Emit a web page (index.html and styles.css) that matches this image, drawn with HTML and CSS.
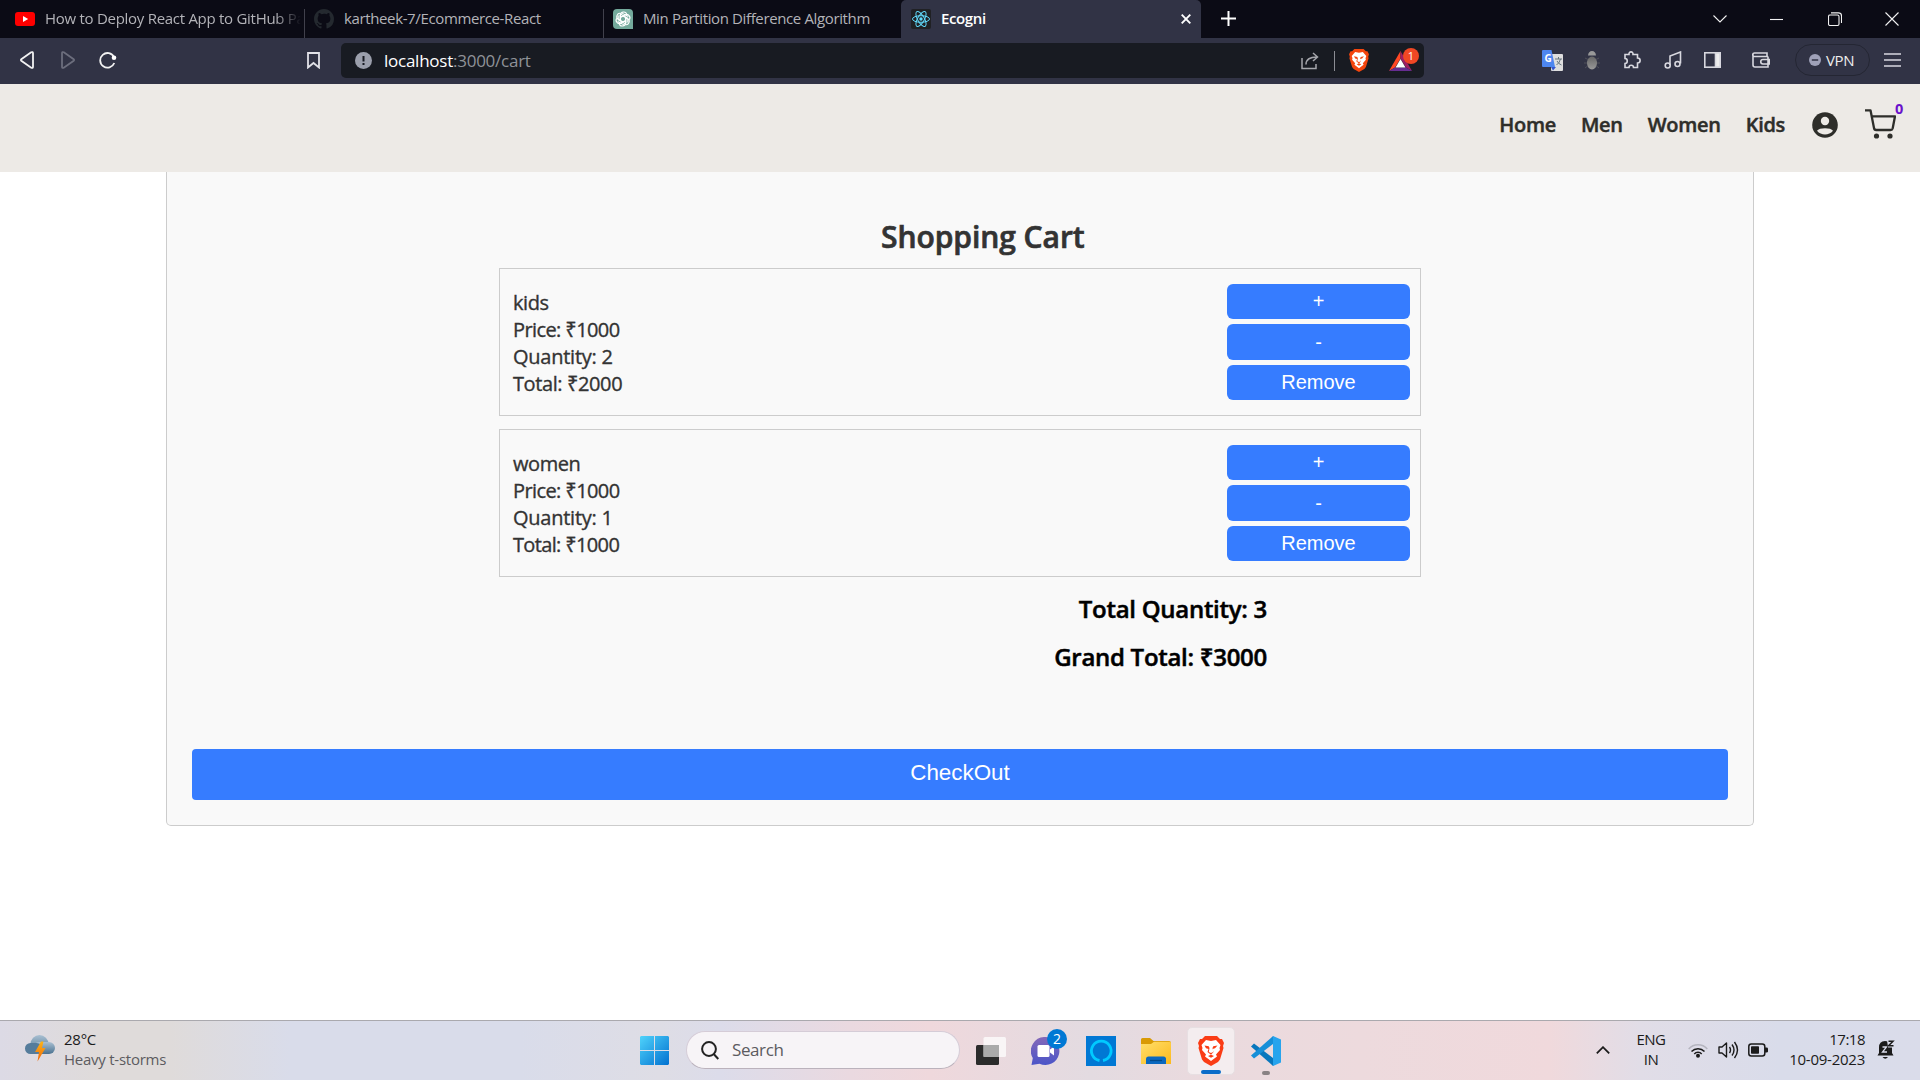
FILE: index.html
```
<!DOCTYPE html>
<html lang="en">
<head>
<meta charset="utf-8">
<title>Ecogni</title>
<link rel="stylesheet" href="styles.css">
</head>
<body>
<svg class="defs" width="0" height="0">
  <defs>
    <symbol id="brave" viewBox="0 0 26 30">
      <path d="M7 0h12l3 3h2l2 4-1 3 .5 2-3.500 11.500L20 26l-7 4-7-4-2-2.500L.5 12 1 10 0 7l2-4h2z"/>
      <path fill="#fff" d="M8 4l5 1 5-1 4.500 5-1 3 .5 2-4 4.500 1 2-6 4.500-6-4.500 1-2L4 14l.5-2-1-3z"/>
      <path d="M6.500 9.500l4.200.8.800 1.700-.7 4 2.200 1 2.200-1-.7-4 .8-1.700 4.200-.8-2.500 2.800-2.500.7 1 3-2.500 2.800L9.500 16l1-3-2.500-.7zM10 20l3-1.300 3 1.300-3 1.800z"/>
      <path fill="none" stroke="#fff" stroke-width="1.500" d="M13 7v9"/>
    </symbol>
    <symbol id="openai" viewBox="0 0 20 20">
      <path fill="#74aa9c" d="M4 0h12a4 4 0 0 1 4 4v16H4a4 4 0 0 1-4-4V4a4 4 0 0 1 4-4z"/>
      <g fill="none" stroke="#fff" stroke-width="1.100">
        <path id="petal" d="M7.500 11.500V6.200c0-4 5.600-4.300 6.200-.8M7.500 8l4.300-2.500 3.600 2.100"/>
        <use href="#petal" transform="rotate(60 10 10)"/><use href="#petal" transform="rotate(120 10 10)"/>
        <use href="#petal" transform="rotate(180 10 10)"/><use href="#petal" transform="rotate(240 10 10)"/>
        <use href="#petal" transform="rotate(300 10 10)"/>
      </g>
    </symbol>
    <linearGradient id="win" x1="0" y1="0" x2="1" y2="1"><stop offset="0" stop-color="#4fd3fb"/><stop offset="1" stop-color="#0271d0"/></linearGradient>
    <linearGradient id="cloud" x1="0" y1="0" x2="0" y2="1"><stop offset="0" stop-color="#a9c0d2"/><stop offset="1" stop-color="#4a7290"/></linearGradient>
    <linearGradient id="bolt" x1="0" y1="0" x2="0" y2="1"><stop offset="0" stop-color="#fbb417"/><stop offset="1" stop-color="#f0650b"/></linearGradient>
    <linearGradient id="folder" x1="0" y1="0" x2="1" y2="1"><stop offset="0" stop-color="#ffdf6b"/><stop offset="1" stop-color="#fcb91d"/></linearGradient>
    <linearGradient id="chat" x1="0" y1="0" x2="0" y2="1"><stop offset="0" stop-color="#8468b8"/><stop offset="1" stop-color="#4b55c8"/></linearGradient>
    <linearGradient id="bug" x1="0" y1="0" x2="0" y2="1"><stop offset="0" stop-color="#666"/><stop offset="1" stop-color="#999"/></linearGradient>
  </defs>
</svg>

<div class="tabbar">
  <div class="tab tab-youtube">
    <svg width="20" height="14" viewBox="0 0 20 14"><rect width="20" height="14" rx="3" fill="#f00"/><path fill="#fff" d="M8 4l5.200 3L8 10z"/></svg>
    <span class="tab-title faded">How to Deploy React App to GitHub Pa</span>
  </div>
  <div class="tab tab-github">
    <svg width="20" height="20" viewBox="0 0 16 16"><path fill="#24292f" d="M8 0C3.580 0 0 3.580 0 8c0 3.540 2.290 6.530 5.470 7.590.4.070.55-.17.55-.38 0-.19-.01-.82-.01-1.490-2.010.37-2.530-.49-2.690-.94-.09-.23-.48-.94-.82-1.130-.28-.15-.68-.52-.01-.53.63-.01 1.080.58 1.230.82.72 1.210 1.870.87 2.330.66.07-.52.28-.87.51-1.070-1.780-.2-3.640-.89-3.640-3.950 0-.87.31-1.590.82-2.150-.08-.2-.36-1.020.08-2.120 0 0 .67-.21 2.200.82A7.600 7.600 0 0 1 8 3.870c.68 0 1.360.09 2 .26 1.530-1.040 2.200-.82 2.200-.82.44 1.100.16 1.920.08 2.120.51.56.82 1.270.82 2.150 0 3.070-1.870 3.750-3.650 3.950.29.25.54.73.54 1.480 0 1.070-.01 1.930-.01 2.200 0 .21.15.46.55.38A8 8 0 0 0 16 8c0-4.420-3.580-8-8-8z"/></svg>
    <span class="tab-title">kartheek-7/Ecommerce-React</span>
  </div>
  <div class="tab tab-chat">
    <svg width="20" height="20"><use href="#openai"/></svg>
    <span class="tab-title">Min Partition Difference Algorithm</span>
  </div>
  <div class="tab tab-active">
    <svg width="20" height="20" viewBox="0 0 20 20"><rect width="20" height="20" rx="2" fill="#202124"/><circle cx="10" cy="10" r="1.700" fill="#61dafb"/><g fill="none" stroke="#61dafb" stroke-width="1"><ellipse cx="10" cy="10" rx="8.500" ry="3.300"/><ellipse cx="10" cy="10" rx="8.500" ry="3.300" transform="rotate(60 10 10)"/><ellipse cx="10" cy="10" rx="8.500" ry="3.300" transform="rotate(120 10 10)"/></g></svg>
    <span class="tab-title">Ecogni</span>
    <svg class="tab-close" width="10" height="10" viewBox="0 0 10 10"><path stroke="#fff" stroke-width="1.900" d="M.7.7l8.600 8.600M9.300.7L.7 9.300"/></svg>
  </div>
  <svg class="new-tab" width="15" height="15" viewBox="0 0 15 15"><path stroke="#fff" stroke-width="2" d="M7.500 0v15M0 7.500h15"/></svg>
  <div class="window-controls">
    <svg width="14" height="14" viewBox="0 0 14 14"><path d="M.5 3.500L7 10l6.500-6.500"/></svg>
    <svg width="14" height="14" viewBox="0 0 14 14"><path d="M0 7.500h13"/></svg>
    <svg width="14" height="14" viewBox="0 0 14 14"><rect x=".5" y="3" width="10.500" height="10.500" rx="1.500"/><path d="M3 .9h7.500a3 3 0 0 1 3 3V11"/></svg>
    <svg width="14" height="14" viewBox="0 0 14 14"><path d="M.5.500l13 13M13.500.500l-13 13"/></svg>
  </div>
</div>

<div class="toolbar">
  <svg class="back" width="14" height="18" viewBox="0 0 14 18"><path d="M11.200 1.300L1.300 8.300q-.8.700 0 1.400l9.900 7q1.800.8 1.800-1V2.300q0-1.800-1.800-1z"/></svg>
  <svg class="forward" width="14" height="18" viewBox="0 0 14 18"><path d="M2.800 1.300l9.900 7q.8.700 0 1.400l-9.900 7q-1.800.8-1.800-1V2.300q0-1.800 1.800-1z"/></svg>
  <svg class="reload" width="18" height="18" viewBox="0 0 18 18"><path d="M15 6A7.300 7.300 0 1 0 15.300 12"/><circle cx="15" cy="6.800" r="2.300" fill="#fff" stroke="none"/></svg>
  <svg class="bookmark" width="13" height="17" viewBox="0 0 13 17"><path d="M1 1h11v14.500L6.500 11 1 15.500z"/></svg>
  <div class="address">
    <svg width="17" height="17" viewBox="0 0 17 17"><circle cx="8.500" cy="8.500" r="8.500" fill="#9b9fac"/><path stroke="#181b22" stroke-width="2" d="M8.500 4v5.500M8.500 11v2"/></svg>
    <span class="url"><b>localhost</b>:3000/cart</span>
    <svg class="share" width="18" height="18" viewBox="0 0 18 18"><path d="M1 6v10.500h14V12M5 12.500c0-5 3-7.500 11-7.500M12 1l4.500 4-4.500 4"/></svg>
    <span class="divider"></span>
    <svg class="shield" width="20" height="23"><use href="#brave"/></svg>
    <span class="rewards">
      <svg width="23" height="20" viewBox="0 0 23 20"><path fill="#ff4724" d="M11.500 0L0 20l6-3.500 5.500-9z"/><path fill="#9e1f63" d="M11.500 0L23 20l-6-3.500-5.500-9z"/><path fill="#662d91" d="M0 20h23l-6-3.500H6z"/><path fill="#fff" d="M11.500 8l5 8.500h-10z"/></svg>
      <span class="count">1</span>
    </span>
  </div>
  <div class="extensions">
    <svg class="translate" width="21" height="21" viewBox="0 0 21 21"><rect x="9" y="4" width="12" height="17" rx="1" fill="#dedede"/><path d="M13 9h7M16.500 7v2M18.500 9q-1 4-4 6M15 11q1.500 3 4.500 4" stroke="#66757f" fill="none"/><path fill="#4d86f0" d="M1 0h8.500l3.500 17H1a1 1 0 0 1-1-1V1a1 1 0 0 1 1-1z"/><path fill="#3557cf" d="M9 17h5l-3 3.500z"/><text x="2.500" y="12" class="g-letter">G</text></svg>
    <svg class="bug" width="16" height="19" viewBox="0 0 16 19"><path stroke="#50505a" d="M1 7l4 2M15 7l-4 2M0 12h16M1 17l4-3M15 17l-4-3"/><path fill="#999" d="M4 4.500Q4.500 0 8 0t4 4.500z"/><ellipse cx="8" cy="12" rx="5" ry="6.500" fill="url(#bug)"/></svg>
    <svg class="line puzzle" width="18" height="18" viewBox="0 0 18 18"><path d="M2 3.500h4C5.500 0 10.500 0 10 3.500h4.500V7c3.500 0 3.500 5 0 5v4.500h-4c0-3-4.500-3-4.500 0H2v-4c3 0 3-5 0-5z"/></svg>
    <svg class="line music" width="18" height="18" viewBox="0 0 18 18"><path d="M6 14V5l10.500-4v11.500"/><circle cx="3.700" cy="14.500" r="2.500"/><circle cx="13.500" cy="13" r="2.500"/></svg>
    <svg class="line panel" width="17" height="16" viewBox="0 0 17 16"><rect x=".8" y=".8" width="15.400" height="14.400"/><path fill="#eee" d="M11.500 1H16v14h-4.500z"/></svg>
    <svg class="line wallet" width="18" height="16" viewBox="0 0 18 16"><path d="M16 4.500H2.500a1.500 1.500 0 0 1 0-3.500H15v3.500M1 2.500V13a2 2 0 0 0 2 2h13V4.500M17.500 7.500H11a2 2 0 0 0 0 4.500h6.500z"/></svg>
    <span class="vpn"><svg width="12" height="12" viewBox="0 0 12 12"><circle cx="6" cy="6" r="6" fill="#9fa1b8"/><path stroke="#313345" stroke-width="1.500" d="M2.800 6h6.400"/></svg>VPN</span>
    <svg class="line burger" width="17" height="14" viewBox="0 0 17 14"><path d="M0 1h17M0 7h17M0 13h17"/></svg>
  </div>
</div>

<header class="site-header">
  <nav>
    <a class="nav-home">Home</a><a class="nav-men">Men</a><a class="nav-women">Women</a><a class="nav-kids">Kids</a>
  </nav>
  <svg class="account" width="26" height="26" viewBox="0 0 26 26"><circle cx="13" cy="13" r="12.800" fill="#2e2e2a"/><circle cx="13" cy="9" r="4.200" fill="#edeae6"/><path fill="#edeae6" d="M5 18.800C7 15.500 19 15.500 21 18.800c-4 5-12 5-16 0z"/></svg>
  <div class="cart-link">
    <svg width="31" height="30" viewBox="0 0 31 30"><path fill="none" stroke="#2e2e2a" stroke-width="2.300" stroke-linejoin="round" d="M0 1.300h5.500L9 19a2.300 2.300 0 0 0 2.200 2h14.300a2.300 2.300 0 0 0 2.200-1.800L30 7.300H6.700"/><circle cx="11.500" cy="27" r="2.600" fill="#2e2e2a"/><circle cx="25" cy="27" r="2.600" fill="#2e2e2a"/></svg>
    <span class="cart-count">0</span>
  </div>
</header>

<main class="cart">
  <h1>Shopping Cart</h1>
  <section class="item">
    <div class="details"><p class="name">kids</p><p class="price">Price: ₹1000</p><p class="qty">Quantity: 2</p><p class="sum">Total: ₹2000</p></div>
    <div class="actions"><button>+</button><button class="minus">-</button><button>Remove</button></div>
  </section>
  <section class="item">
    <div class="details"><p class="name">women</p><p class="price">Price: ₹1000</p><p class="qty">Quantity: 1</p><p class="sum narrow">Total: ₹1000</p></div>
    <div class="actions"><button>+</button><button class="minus">-</button><button>Remove</button></div>
  </section>
  <div class="totals"><p>Total Quantity: 3</p><p>Grand Total: ₹3000</p></div>
  <button class="checkout">CheckOut</button>
</main>

<footer class="taskbar">
  <div class="weather">
    <svg width="30" height="27" viewBox="0 0 30 27"><circle cx="14.500" cy="9" r="9" fill="url(#cloud)"/><rect x="8" y="7" width="22" height="12" rx="6" fill="url(#cloud)"/><rect y="8" width="17" height="11" rx="5.500" fill="#557c9b"/><path fill="url(#bolt)" d="M16 6.500h2.500L17 13h3.500L12.500 26.500 14 17h-4z"/></svg>
    <div class="weather-text"><p>28°C</p><p class="muted">Heavy t-storms</p></div>
  </div>
  <div class="apps">
    <svg width="29" height="29" viewBox="0 0 29 29"><path fill="url(#win)" d="M1 0h13v14H0V1zM15 0h13l1 1v13H15zM0 15h14v14H1l-1-1zM15 15h14v13l-1 1H15z"/></svg>
    <div class="search"><svg width="18" height="19" viewBox="0 0 18 19"><circle cx="8" cy="8" r="6.900"/><path d="M12.700 13l4.600 5"/></svg>Search</div>
    <svg class="task-view" width="30" height="28" viewBox="0 0 30 28"><rect y="8" width="23" height="20" rx="1.500" fill="#2b2b2b"/><rect x="7.500" width="22.500" height="20" rx="1.500" fill="#fff" opacity=".72"/><path fill="#aaa" d="M7.500 8H23v12H7.500z"/></svg>
    <div class="meet">
      <svg width="29" height="28" viewBox="0 0 29 28"><path fill="url(#chat)" d="M14.500 0a14 14 0 1 1-6 26.700L.5 28l1.300-7A14 14 0 0 1 14.500 0z"/><rect x="6.500" y="8" width="12" height="12" rx="1.500" fill="#fff"/><path fill="#fff" d="M19 12.500l4-3v9l-4-3z"/></svg>
      <span class="badge">2</span>
    </div>
    <svg class="alexa" width="30" height="30" viewBox="0 0 30 30"><path fill="#0078d4" d="M0 0h30v30H0z"/><path fill="none" stroke="#00caff" stroke-width="2.800" d="M13.500 24.500A9.800 9.800 0 1 1 17 24.500"/></svg>
    <svg class="explorer" width="30" height="26" viewBox="0 0 30 26"><path fill="#d99a04" d="M0 1.500Q0 0 1.500 0H9l3.500 3H28q2 0 2 2v8H0z"/><path fill="url(#folder)" d="M0 6h10l3-2.200h15.500Q30 3.800 30 5v21H0z"/><path fill="#0b68bf" d="M5 26v-5q0-2.500 2.500-2.500h15q2.500 0 2.500 2.500v5z"/><path stroke="#034a8a" stroke-width="1.300" d="M9 22.500h12"/></svg>
    <div class="app-active"><svg width="26" height="30"><use href="#brave"/></svg><span></span></div>
    <div class="app-code"><svg width="30" height="30" viewBox="0 0 30 30"><path fill="#0877bd" d="M0 10.500l3-3L26 25l-4 5z"/><path fill="#168fd8" d="M0 19.500l3 3L26 5l-4-5z"/><path fill="#27a4ed" d="M22 0l8 3.500v23L22 30z"/></svg><span></span></div>
  </div>
  <div class="tray">
    <svg width="14" height="8" viewBox="0 0 14 8"><path fill="none" stroke="#1b1b1b" stroke-width="1.800" d="M.8 7.300L7 1.200l6.200 6.100"/></svg>
    <div class="lang"><p>ENG</p><p>IN</p></div>
    <svg class="wifi" width="20" height="15" viewBox="0 0 20 15"><g fill="none" stroke="#1b1b1b" stroke-width="1.500"><path stroke="#b5b5bf" d="M.7 6a12.500 12.500 0 0 1 18.600 0"/><path d="M3.500 8.500a9 9 0 0 1 13 0M6.300 11a5 5 0 0 1 7.400 0"/></g><circle cx="10" cy="12.800" r="2" fill="#1b1b1b"/></svg>
    <svg class="volume" width="21" height="18" viewBox="0 0 21 18"><g fill="none" stroke="#1b1b1b" stroke-width="1.400"><path stroke-linejoin="round" d="M1 6h3l4.500-4v14L4 12H1z"/><path d="M11.500 6q2 3 0 6M14 3.500q4 5.500 0 11M16.500 1q6 8 0 16"/></g></svg>
    <svg class="battery" width="20" height="14" viewBox="0 0 20 14"><rect x=".8" y="1" width="16" height="12" rx="2.500" fill="none" stroke="#1b1b1b" stroke-width="1.500"/><rect x="3" y="3.200" width="8" height="7.600" rx=".8" fill="#1b1b1b"/><path fill="#1b1b1b" d="M17 4.500h1.500q1.500 0 1.500 1v3q0 1-1.500 1H17z"/></svg>
    <div class="clock"><p class="time">17:18</p><p>10-09-2023</p></div>
    <svg class="bell" width="18" height="20" viewBox="0 0 18 20"><path fill="#1b1b1b" d="M2 7.500Q2 1 8 1q7 0 7 7v5l1.500 2.500H.5L2 13zM5.500 17h5.500q-2.700 3.500-5.500 0z"/><path fill="none" stroke="#dadcea" stroke-width="1.300" d="M5.500 7h4l-4 5h4.500"/><path fill="#dadcea" d="M10 0h8v7.500h-7z"/><path fill="none" stroke="#1b1b1b" stroke-width="1.500" d="M11.500 1.200H16l-4.500 4.600H16.500"/></svg>
  </div>
</footer>
</body>
</html>
```
FILE: styles.css
```
* { box-sizing: border-box; }
body { margin: 0; width: 1920px; height: 1080px; overflow: hidden; display: flex; flex-direction: column; background: #fff; font-family: "Open Sans", "Noto Sans", sans-serif; }
p, h1 { margin: 0; }
svg { display: block; flex: none; }
.defs { position: absolute; }

.tabbar { flex: none; height: 38px; display: flex; align-items: stretch; background: #0b0b15; }
.tab { display: flex; align-items: center; gap: 10px; color: #b3b3b8; font-size: 15px; letter-spacing: -.37px; white-space: nowrap; }
.tab-youtube { width: 304px; padding-left: 15px; }
.tab-title { line-height: 30px; padding-bottom: 2px; }
.faded { width: 259px; letter-spacing: -.28px; -webkit-mask-image: linear-gradient(90deg, #000 230px, transparent 256px); mask-image: linear-gradient(90deg, #000 230px, transparent 256px); }
.tab-github, .tab-chat { padding-left: 10px; background: linear-gradient(#41414c, #41414c) 0 9px / 1px 29px no-repeat; }
.tab-github { width: 299px; }
.tab-chat { width: 298px; }
.tab-active { width: 300px; padding: 0 10px; border-radius: 5px 5px 0 0; background: #313345; color: #fff; font-weight: 600; }
.tab-close { margin-left: auto; }
.new-tab { margin: 11px 0 0 20px; }
.window-controls { margin-left: auto; margin-right: 21px; padding-bottom: 1px; display: flex; align-items: center; gap: 43.500px; fill: none; stroke: #f2f2f2; stroke-width: 1.100; }

.toolbar { flex: none; height: 46px; display: flex; align-items: center; background: #313345; fill: none; stroke-width: 1.800; padding-bottom: 2px; }
.back { margin-left: 20px; stroke: #f2f2f2; }
.forward { margin-left: 27px; stroke: #6c6e7d; }
.reload { margin-left: 24px; stroke: #f2f2f2; }
.bookmark { margin-left: 190px; stroke: #e2e2e8; }
.address { width: 1083px; height: 35px; margin-left: 21px; margin-top: 1px; padding-left: 14px; border-radius: 5px; display: flex; align-items: center; background: #181b22; }
.url { margin-left: 12px; font-size: 17px; letter-spacing: -.25px; color: #8f9298; }
.url b { font-weight: 400; color: #fff; }
.share { margin-left: auto; stroke: #a5a6ac; stroke-width: 1.500; }
.divider { width: 1px; height: 20px; margin-left: 15px; background: #8b8d94; }
.shield { margin-left: 14px; fill: #f4450d; }
.rewards { position: relative; margin: 0 12px 0 20px; }
.count { position: absolute; left: 14px; top: -3px; width: 16px; height: 16px; border-radius: 8px; background: #f04724; color: #fff; font-size: 11px; line-height: 16px; text-align: center; }
.extensions { display: flex; align-items: center; padding-left: 118px; }
.g-letter { font: bold 10px "Open Sans", sans-serif; fill: #fff; stroke: none; }
.line { stroke: #d8d8df; stroke-width: 1.600; }
.bug { margin-left: 21px; stroke-width: 1; }
.translate { stroke-width: 1; }
.puzzle { margin-left: 23px; }
.music { margin-left: 23px; }
.panel { margin-left: 22px; }
.wallet { margin-left: 31px; }
.vpn { width: 75px; height: 32px; margin-left: 25px; border: 1px solid #242633; border-radius: 16px; display: flex; align-items: center; justify-content: center; gap: 5px; color: #eee; font-size: 15px; letter-spacing: -.4px; padding: 0 2px 1px 0; }
.burger { margin-left: 14px; }

.site-header { flex: none; height: 88px; display: flex; justify-content: flex-end; align-items: center; padding: 0 24px 6px 0; background: #edeae6; color: #2e2e2a; }
nav { display: flex; gap: 25px; padding-bottom: 2px; font-size: 20px; font-weight: 600; letter-spacing: -.4px; -webkit-text-stroke: .45px currentColor; }
nav a { white-space: nowrap; }
.nav-women, .nav-kids { letter-spacing: -.3px; }
.nav-home, .nav-men { letter-spacing: -.3px; }
.account { margin-left: 27px; }
.cart-link { position: relative; margin-left: 27px; }
.cart-link svg { margin-bottom: 2px; }
.cart-count { position: absolute; left: 30px; top: -10px; color: #6a11cb; font-size: 14.500px; font-weight: 700; line-height: 19px; }

.cart { flex: none; width: 1588px; height: 654px; margin-left: 166px; padding: 0 25px 25px; border: 1px solid #ccc; border-top: 0; border-radius: 0 0 5px 5px; background: #f9f9f9; display: flex; flex-direction: column; }
.cart h1 { margin-left: 689px; padding-top: 41px; height: 96px; font-size: 30px; line-height: 48px; font-weight: 600; letter-spacing: -.05px; color: #333; -webkit-text-stroke: .7px currentColor; }
.item { flex: none; width: 922px; height: 148px; margin: 0 0 13px 307px; padding: 0 10px 0 13px; border: 1px solid #ccc; display: flex; justify-content: space-between; }
.details { padding-top: 20px; font-size: 20px; font-weight: 400; line-height: 27px; color: #333; -webkit-text-stroke: .35px currentColor; }
.name { letter-spacing: -.45px; }
.price { letter-spacing: -.6px; }
.qty { letter-spacing: -.25px; }
.sum { letter-spacing: -.4px; }
.sum.narrow { letter-spacing: -.65px; }
.actions { width: 183px; padding-top: 15px; display: flex; flex-direction: column; gap: 5px; }
.actions button { height: 35px; border: 0; border-radius: 6px; padding: 0 0 1px; background: #367cff; color: #fff; font: 20px "Liberation Sans", Arial, sans-serif; }
.actions .minus { height: 36px; padding: 1px 0 0; }
.totals { width: 1075px; text-align: right; font-size: 24px; font-weight: 600; letter-spacing: -.28px; line-height: 48px; margin-top: -5px; color: #000; -webkit-text-stroke: .5px currentColor; }
.checkout { width: 1536px; height: 51px; margin-top: auto; border: 0; border-radius: 4px; padding: 0 0 3px; background: #367cff; color: #fff; font: 22.400px "Liberation Sans", Arial, sans-serif; }

.taskbar { flex: none; height: 60px; margin-top: auto; border-top: 1px solid #aaa9ae; display: flex; align-items: center; color: #1b1b1b; font-size: 15px; line-height: 20px; letter-spacing: -.25px; background: linear-gradient(90deg, #dcdae5 0, #dfdbda 100px, #dfdbda 170px, #d9dcea 290px, #d9dcea 520px, #dedde5 660px, #dcdcea 720px, #ead9e0 850px, #efd8dc 930px, #e3dbe1 1090px, #eadade 1200px, #eddadd 1360px, #f0d9dc 1550px, #e1dde7 1640px, #d9dcea 1780px, #dadcea 1920px); }
.weather { width: 640px; padding-left: 25px; display: flex; align-items: center; gap: 9px; }
.weather svg { margin-bottom: 4px; }
.weather-text, .lang, .clock { padding-bottom: 3px; }
.muted { color: #5c5b60; }
.apps { display: flex; align-items: center; }
.search { width: 274px; height: 38px; margin: 0 0 1px 17px; padding-left: 14px; border: 1px solid #d5ccd7; border-bottom-color: #bbb2bc; border-radius: 19px; display: flex; align-items: center; gap: 13px; background: #f7f4f7; color: #5c5b60; font-size: 17px; letter-spacing: -.4px; }
.search svg { fill: none; stroke: #222; stroke-width: 2; }
.task-view { margin-left: 16px; }
.meet { position: relative; margin-left: 25px; }
.badge { position: absolute; left: 16px; top: -8px; width: 20px; height: 20px; border-radius: 10px; background: #0078d4; color: #fff; font-size: 14px; text-align: center; }
.alexa { margin-left: 26px; }
.explorer { margin-left: 25px; }
.app-active, .app-code { position: relative; height: 48px; display: flex; align-items: center; justify-content: center; }
.app-active { width: 48px; margin-left: 16px; border: 1px solid #e7dfe2; border-radius: 5px; background: #f4edef; fill: #fa3c15; }
.app-active span, .app-code span { position: absolute; bottom: 0; height: 4px; border-radius: 2px; }
.app-active span { left: 13px; width: 20px; background: #0a6cc9; }
.app-code { width: 30px; margin-left: 16px; }
.app-code span { left: 11px; width: 8px; background: #8a8284; }
.tray { margin-left: auto; padding-right: 25px; display: flex; align-items: center; }
.tray svg { margin-bottom: 1px; }
.lang { width: 36px; margin-left: 23px; text-align: center; letter-spacing: -.5px; }
.wifi { margin-left: 19px; }
.volume { margin-left: 10px; }
.battery { margin-left: 9px; }
.clock { width: 97px; text-align: right; }
.time { letter-spacing: -.5px; }
.bell { margin-left: 12px; }
```
